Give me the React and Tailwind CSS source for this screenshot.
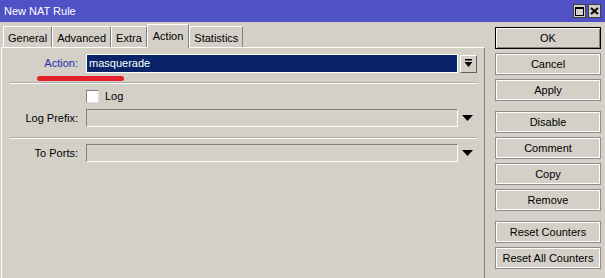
import React from "react";

const font = { fontFamily: '"Liberation Sans", Arial, sans-serif' };

function Btn({ children, def }) {
  return (
    <div
      className={
        "h-[22px] w-[106px] flex items-center justify-center text-[11px] text-black bg-[#d4d0c8] " +
        (def
          ? "border border-black shadow-[inset_1px_1px_0_#ffffff,inset_-1px_-1px_0_#808080]"
          : "border border-[#8c8c8c] shadow-[inset_1px_1px_0_#ffffff,inset_-1px_-1px_0_#ffffff]")
      }
    >
      {children}
    </div>
  );
}

function Tab({ label, active }) {
  if (active) {
    return (
      <div className="h-[24px] -mb-[1px] px-[5px] flex items-center text-[11px] bg-[#d4d0c8] border-t border-l border-white border-r border-r-[#808080] relative z-10 self-end">
        {label}
      </div>
    );
  }
  return (
    <div className="h-[21px] px-[4px] flex items-center text-[11px] bg-[#d4d0c8] border-t border-l border-white border-r border-r-[#808080] pt-[2px]">
      {label}
    </div>
  );
}

function Arrow() {
  return (
    <svg width="12" height="7" viewBox="0 0 12 7">
      <polygon points="0,0 11,0 5.5,6" fill="#000" />
    </svg>
  );
}

function Field() {
  return (
    <div className="w-[372px] h-[18px] bg-[#d4d0c8] border-t border-l border-[#808080] border-b border-r border-b-white border-r-white" />
  );
}

function Sep() {
  return <div className="ml-[8px] w-[467px] h-[2px] border-t border-[#b0aca4] border-b border-b-white" />;
}

export default function App() {
  return (
    <div style={font} className="w-[605px] h-[278px] bg-[#d4d0c8] flex flex-col overflow-hidden text-black">
      {/* Title bar */}
      <div className="h-[22px] bg-[#5151c6] flex items-center justify-between pl-[4px] pr-[4px]">
        <span className="text-white text-[11px]">New NAT Rule</span>
        <div className="flex gap-[2px] items-center">
          <div className="w-[13px] h-[14px] bg-[#d4d0c8] border border-[#404040] flex items-center justify-center">
            <div className="w-[9px] h-[9px] border border-black border-t-2" />
          </div>
          <div className="w-[13px] h-[14px] bg-[#d4d0c8] border border-[#404040] flex items-center justify-center">
            <svg width="9" height="8" viewBox="0 0 9 8">
              <path d="M1 1 L8 7 M8 1 L1 7" stroke="#000" strokeWidth="2" />
            </svg>
          </div>
        </div>
      </div>

      <div className="flex flex-1">
        {/* left side */}
        <div className="w-[485px] flex flex-col">
          <div className="h-[25px] flex items-end pl-[3px]">
            <Tab label="General" />
            <Tab label="Advanced" />
            <Tab label="Extra" />
            <Tab label="Action" active />
            <Tab label="Statistics" />
          </div>
          <div className="flex-1 ml-[1px] border-t border-l border-white border-r border-r-[#808080] relative">
            <div className="flex flex-col pt-[6px]">
              {/* Action row */}
              <div className="flex items-center h-[19px]">
                <div className="w-[76px] text-right text-[11px] text-[#2a2ab0]">Action:</div>
                <div className="ml-[8px] w-[372px] h-[19px] bg-[#0a246a] border border-white flex items-center pl-[2px] text-white text-[11px]">
                  masquerade
                </div>
                <div className="ml-[2px] w-[17px] h-[18px] bg-[#d4d0c8] border border-t-white border-l-white border-b-[#606060] border-r-[#606060] flex items-center justify-center">
                  <svg width="9" height="9" viewBox="0 0 9 9">
                    <rect x="1" y="0" width="7" height="1.5" fill="#000" />
                    <polygon points="0.5,3 8.5,3 4.5,8" fill="#000" />
                  </svg>
                </div>
              </div>
              <div className="h-[9px]" />
              <Sep />
              <div className="h-[6px]" />
              {/* Log row */}
              <div className="flex items-center h-[13px]">
                <div className="ml-[84px] w-[13px] h-[13px] bg-white border-t border-l border-[#808080] border-b border-r border-b-[#e0e0e0] border-r-[#e0e0e0]" />
                <span className="ml-[6px] text-[11px]">Log</span>
              </div>
              <div className="h-[6px]" />
              {/* Log prefix */}
              <div className="flex items-center h-[18px]">
                <div className="w-[76px] text-right text-[11px]">Log Prefix:</div>
                <div className="ml-[8px]"><Field /></div>
                <div className="ml-[4px]"><Arrow /></div>
              </div>
              <div className="h-[10px]" />
              <Sep />
              <div className="h-[5px]" />
              {/* To Ports */}
              <div className="flex items-center h-[18px]">
                <div className="w-[76px] text-right text-[11px]">To Ports:</div>
                <div className="ml-[8px]"><Field /></div>
                <div className="ml-[4px]"><Arrow /></div>
              </div>
            </div>
            {/* red annotation underline */}
            <div className="absolute left-[35px] top-[28px] w-[87px] h-[5px] rounded-full bg-[#e4202a]" />
          </div>
        </div>

        {/* right buttons */}
        <div className="flex flex-col pl-[10px] pt-[5px]">
          <Btn def>OK</Btn>
          <div className="h-[4px]" />
          <Btn>Cancel</Btn>
          <div className="h-[4px]" />
          <Btn>Apply</Btn>
          <div className="h-[10px]" />
          <Btn>Disable</Btn>
          <div className="h-[4px]" />
          <Btn>Comment</Btn>
          <div className="h-[4px]" />
          <Btn>Copy</Btn>
          <div className="h-[4px]" />
          <Btn>Remove</Btn>
          <div className="h-[10px]" />
          <Btn>Reset Counters</Btn>
          <div className="h-[4px]" />
          <Btn>Reset All Counters</Btn>
        </div>
      </div>
    </div>
  );
}
